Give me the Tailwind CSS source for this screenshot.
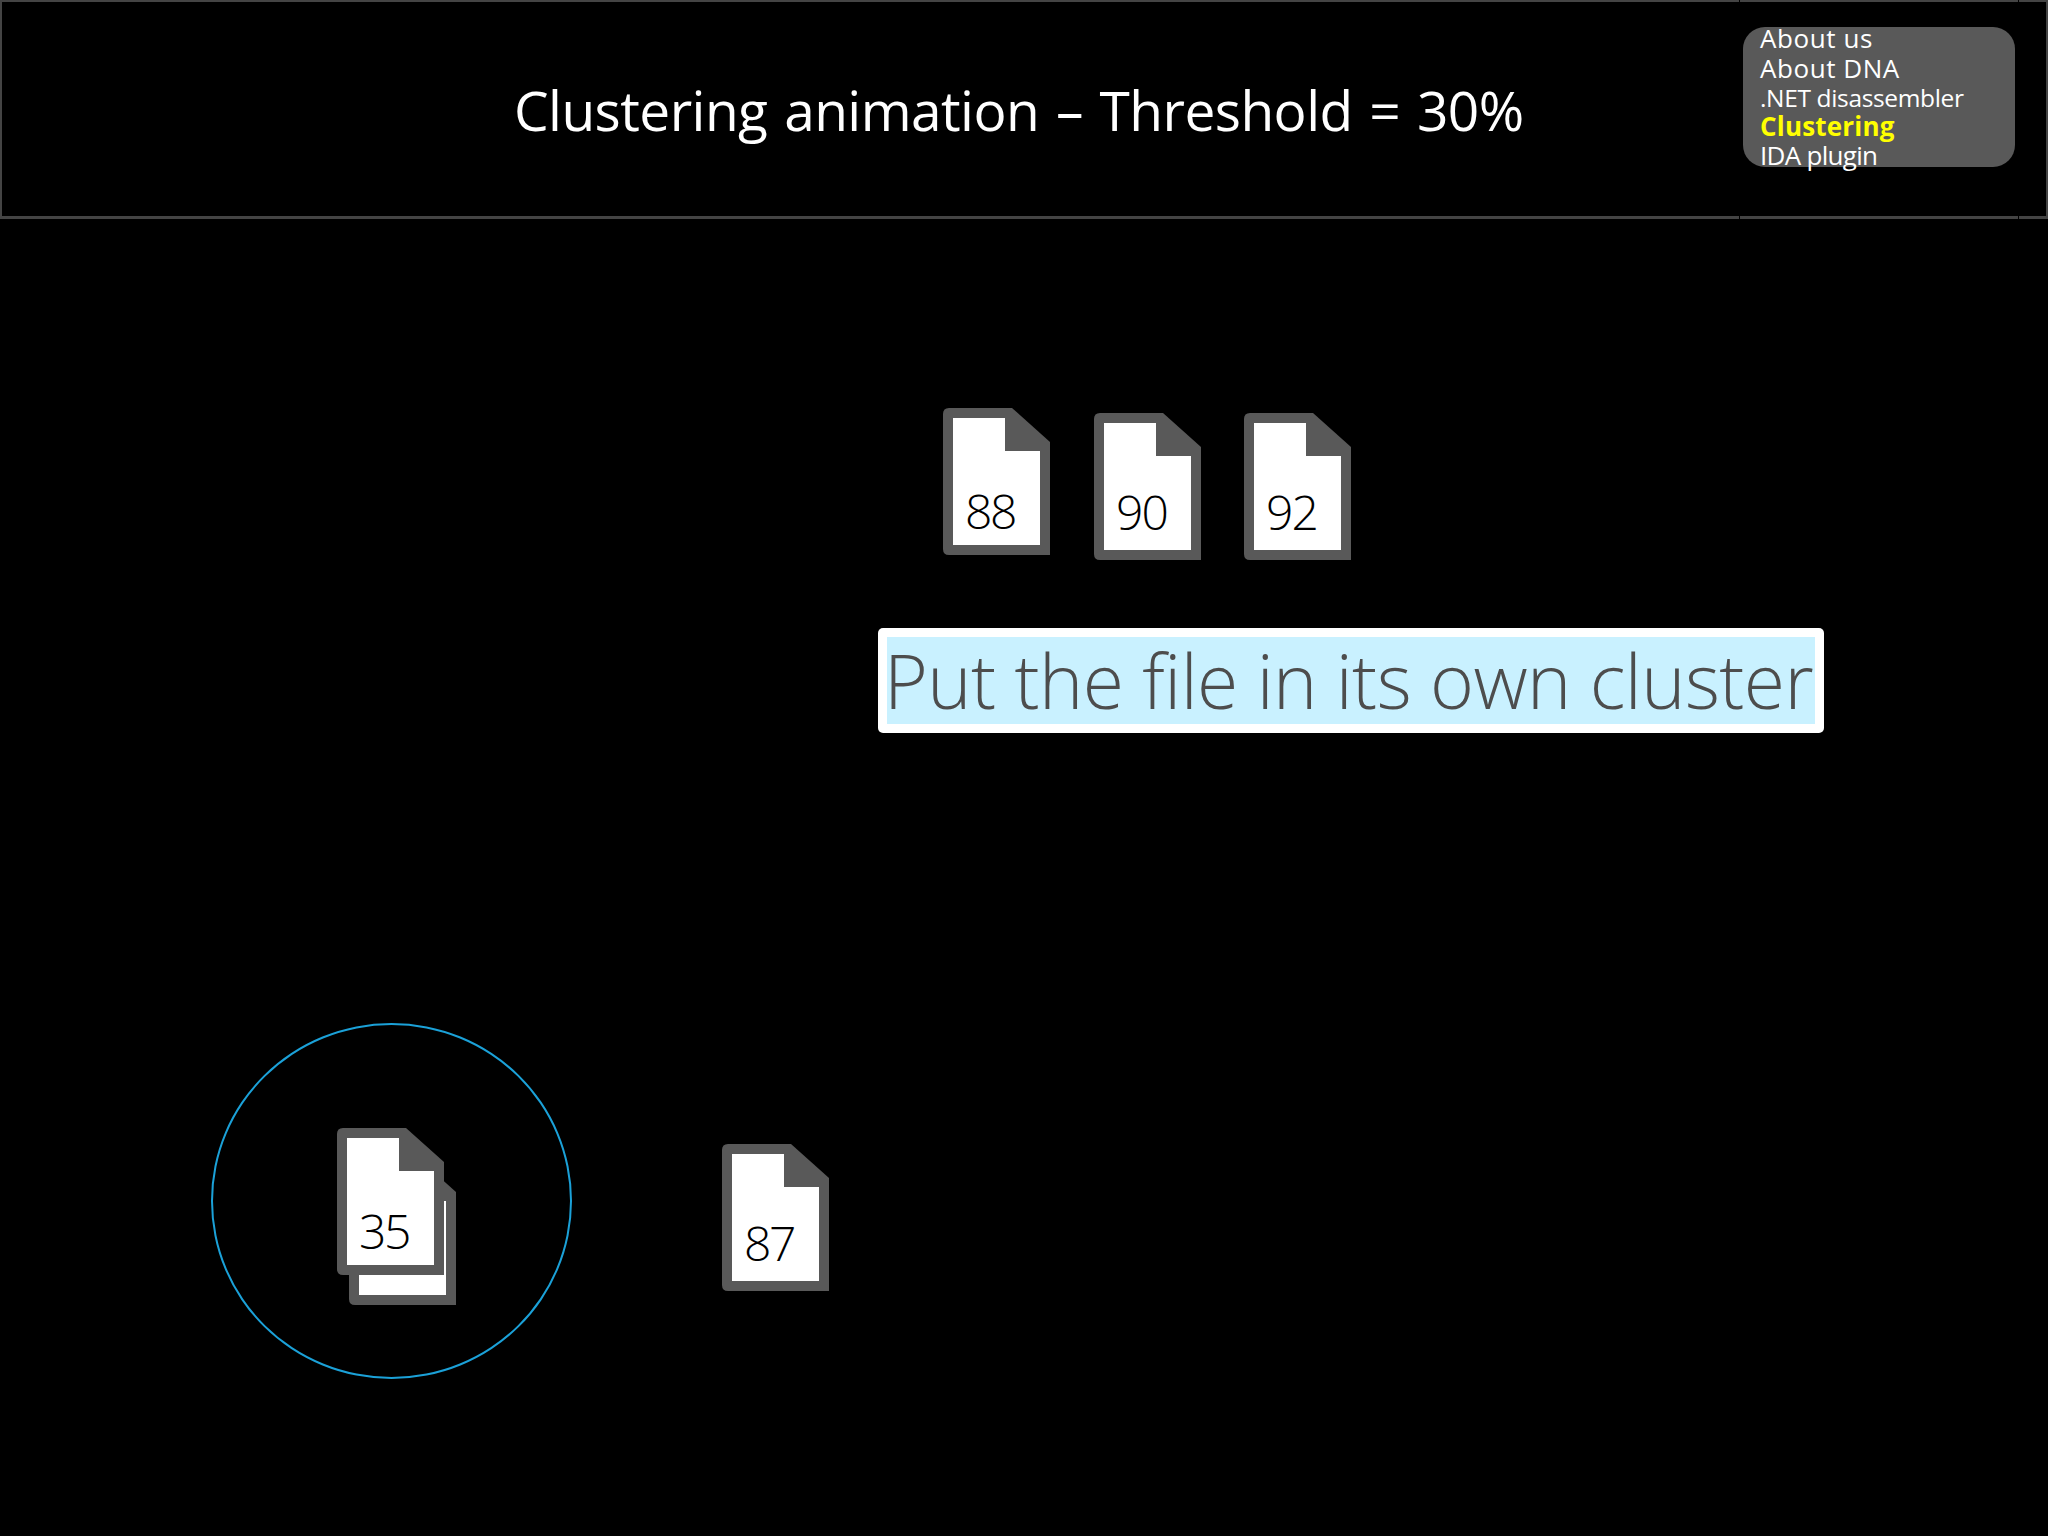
<!DOCTYPE html>
<html lang="en">
<head>
    <meta charset="UTF-8">
    <title>Clustering animation</title>
    <script src="https://cdn.jsdelivr.net/npm/@tailwindcss/browser@4"></script>
</head>
<body class="bg-black font-['Open_Sans',sans-serif]">
    <div class="relative w-[2048px] h-[1536px] overflow-hidden bg-black">
        <!-- slide header -->
        <header class="relative flex items-center h-[219px] border-2 border-b-[3px] border-[#444444] bg-black">
            <h1 class="ml-[512px] text-[55px] font-normal text-white leading-none whitespace-nowrap tracking-[-0.55px] [word-spacing:3px]">Clustering animation – Threshold = 30%</h1>
            <nav class="ml-auto mr-[31px] mb-[25px] flex flex-col justify-center w-[272px] h-[140px] pl-[17px] rounded-[22px] bg-[#595959] text-[26px] leading-[29px] font-normal text-white whitespace-nowrap">
                <a class="leading-[31px] tracking-[0.6px]">About us</a>
                <a class="tracking-[0.55px]">About DNA</a>
                <a class="text-[24.5px] tracking-[-0.35px]">.NET disassembler</a>
                <a class="font-bold text-[#ffff00] tracking-[0.2px]">Clustering</a>
                <a class="tracking-[-0.7px]">IDA plugin</a>
            </nav>
            <!-- small gaps in the rule, either side of the menu -->
            <span class="absolute left-[1737px] -top-[2px] w-[1px] h-[2px] bg-black"></span>
            <span class="absolute left-[2016px] -top-[2px] w-[1px] h-[2px] bg-black"></span>
            <span class="absolute left-[1737px] -bottom-[3px] w-[1px] h-[3px] bg-black"></span>
            <span class="absolute left-[2016px] -bottom-[3px] w-[1px] h-[3px] bg-black"></span>
        </header>

        <!-- files on the canvas -->
        <div class="absolute left-[943px] top-[408px] w-[107px] h-[147px]">
            <svg viewBox="0 0 107 147" class="w-full h-full"><path fill="#595959" d="M6 0H69L107 34V147H6Q0 147 0 141V6Q0 0 6 0Z"/><path fill="#fff" d="M10 10H62V43H97V137H10Z"/></svg>
            <span class="absolute left-[22px] top-[73px] text-[48px] leading-[60px] font-light text-black tracking-[-2.5px]">88</span>
        </div>
        <div class="absolute left-[1094px] top-[413px] w-[107px] h-[147px]">
            <svg viewBox="0 0 107 147" class="w-full h-full"><path fill="#595959" d="M6 0H69L107 34V147H6Q0 147 0 141V6Q0 0 6 0Z"/><path fill="#fff" d="M10 10H62V43H97V137H10Z"/></svg>
            <span class="absolute left-[22px] top-[69px] text-[48px] leading-[60px] font-light text-black tracking-[-2px]">90</span>
        </div>
        <div class="absolute left-[1244px] top-[413px] w-[107px] h-[147px]">
            <svg viewBox="0 0 107 147" class="w-full h-full"><path fill="#595959" d="M6 0H69L107 34V147H6Q0 147 0 141V6Q0 0 6 0Z"/><path fill="#fff" d="M10 10H62V43H97V137H10Z"/></svg>
            <span class="absolute left-[22px] top-[69px] text-[48px] leading-[60px] font-light text-black tracking-[-2px]">92</span>
        </div>
        <div class="absolute left-[722px] top-[1144px] w-[107px] h-[147px]">
            <svg viewBox="0 0 107 147" class="w-full h-full"><path fill="#595959" d="M6 0H69L107 34V147H6Q0 147 0 141V6Q0 0 6 0Z"/><path fill="#fff" d="M10 10H62V43H97V137H10Z"/></svg>
            <span class="absolute left-[22px] top-[69px] text-[48px] leading-[60px] font-light text-black tracking-[-2.5px]">87</span>
        </div>

        <!-- cluster -->
        <div class="absolute left-[211px] top-[1023px] w-[361px] h-[356px] rounded-[50%] border-2 border-[#1ba1d8]"></div>
        <div class="absolute left-[349px] top-[1158px] w-[107px] h-[147px]">
            <svg viewBox="0 0 107 147" class="w-full h-full"><path fill="#595959" d="M6 0H69L107 34V147H6Q0 147 0 141V6Q0 0 6 0Z"/><path fill="#fff" d="M10 10H62V43H97V137H10Z"/></svg>
        </div>
        <div class="absolute left-[337px] top-[1128px] w-[107px] h-[147px]">
            <svg viewBox="0 0 107 147" class="w-full h-full"><path fill="#595959" d="M6 0H69L107 34V147H6Q0 147 0 141V6Q0 0 6 0Z"/><path fill="#fff" d="M10 10H62V43H97V137H10Z"/></svg>
            <span class="absolute left-[22px] top-[73px] text-[48px] leading-[60px] font-light text-black tracking-[-2.5px]">35</span>
        </div>

        <!-- callout -->
        <div class="absolute left-[878px] top-[628px] w-[946px] h-[105px] p-[9px] rounded-[5px] bg-white">
            <div class="flex items-center justify-center h-full pr-[5px] bg-[#c9f1ff]">
                <span class="text-[75px] font-light leading-none text-[#4d4d4d] whitespace-nowrap tracking-[-0.55px]">Put the file in its own cluster</span>
            </div>
        </div>
    </div>
</body>
</html>
